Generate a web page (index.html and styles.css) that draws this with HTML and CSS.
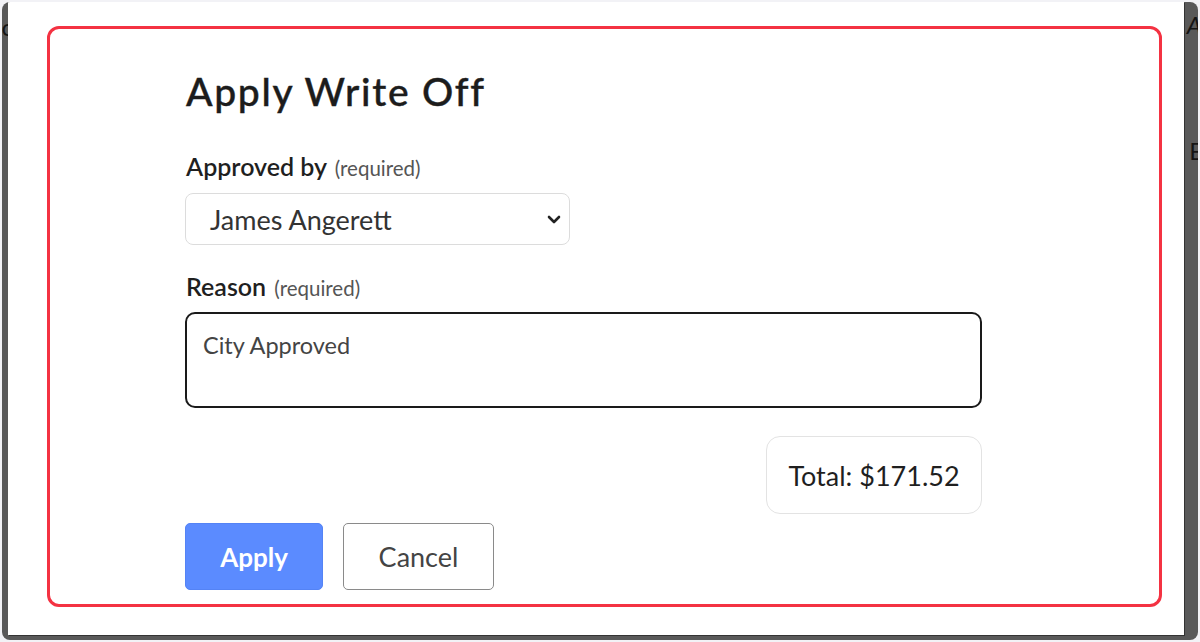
FILE: index.html
```html
<!DOCTYPE html>
<html lang="en">
<head>
<meta charset="utf-8">
<title>Apply Write Off</title>
<link rel="stylesheet" href="styles.css">
</head>
<body>
<div class="backdrop">
  <span class="ghost ghost-left-top">nc</span>
  <span class="ghost ghost-right-a">A</span>
  <span class="ghost ghost-right-e">E</span>
  <div class="modal">
    <div class="frame">
      <h1 class="title">Apply Write Off</h1>
      <div class="field">
        <label class="label">Approved by <span class="req">(required)</span></label>
        <div class="select">
          <span class="select-value">James Angerett</span>
          <svg class="chevron" width="14" height="9" viewBox="0 0 14 9"><path d="M2 2 L7 7 L12 2" fill="none" stroke="#222" stroke-width="2.6" stroke-linecap="round" stroke-linejoin="round"/></svg>
        </div>
      </div>
      <div class="field field-reason">
        <label class="label">Reason <span class="req">(required)</span></label>
        <textarea class="textarea">City Approved</textarea>
      </div>
      <div class="total-row">
        <div class="total">Total: $171.52</div>
      </div>
      <div class="actions">
        <button class="btn btn-primary">Apply</button>
        <button class="btn btn-secondary">Cancel</button>
      </div>
    </div>
  </div>
</div>
</body>
</html>
```
FILE: styles.css
```css
* { box-sizing: border-box; }
html, body { margin: 0; padding: 0; }
body {
  background: #f2f2f6;
  width: 1200px;
  height: 642px;
  overflow: hidden;
  font-family: Lato, "Noto Sans", sans-serif;
  padding: 2px;
}
.backdrop {
  position: relative;
  height: 638px;
  background: #595959;
  border-radius: 8px;
  display: flex;
  padding: 0 14px 5px 6px;
  overflow: hidden;
}
.ghost {
  position: absolute;
  color: #141414;
  font-size: 24px;
  font-family: Lato, sans-serif;
}
.ghost-left-top { left: -14px; top: 10px; }
.ghost-right-a { right: -4px; top: 8px; font-style: italic; }
.ghost-right-e { right: -5px; top: 134px; }
.modal {
  position: relative;
  flex: 1;
  background: #fff;
  box-shadow: 1px 1px 0 #333;
  padding: 24px 22px 28px 39px;
  display: flex;
}
.frame {
  flex: 1;
  border: 3px solid #f43242;
  border-radius: 12px;
  padding: 39px 0 0 135px;
  display: flex;
  flex-direction: column;
  align-items: flex-start;
}
.title {
  margin: 0 0 0 1px;
  font-size: 39px;
  line-height: 46px;
  font-weight: 500;
  letter-spacing: 1.7px;
  color: #1c1c1c;
  -webkit-text-stroke: 0.4px #1c1c1c;
}
.field { display: flex; flex-direction: column; align-items: flex-start; margin-top: 37px; }
.field-reason { margin-top: 26px; }
.label {
  font-size: 25px;
  line-height: 30px;
  font-weight: 600;
  color: #1f1f1f;
  margin-left: 1px;
}
.req {
  font-size: 20.5px;
  font-weight: 400;
  color: #555;
  margin-left: 2px;
}
.select {
  margin-top: 10px;
  width: 385px;
  height: 52px;
  border: 1px solid #dcdcdc;
  border-radius: 8px;
  display: flex;
  align-items: center;
  justify-content: space-between;
  padding: 0 8px 0 24px;
}
.select-value {
  font-size: 27px;
  color: #333;
}
.textarea {
  margin-top: 9px;
  width: 797px;
  height: 96px;
  border: 2px solid #1a1a1a;
  border-radius: 10px;
  font-family: Lato, sans-serif;
  font-size: 23.5px;
  color: #444;
  padding: 17px 16px;
  resize: none;
  outline: none;
}
.total-row {
  width: 797px;
  display: flex;
  justify-content: flex-end;
  margin-top: 28px;
}
.total {
  width: 216px;
  height: 78px;
  border: 1px solid #e3e3e3;
  border-radius: 14px;
  display: flex;
  align-items: center;
  justify-content: center;
  font-size: 27px;
  color: #1f1f1f;
}
.actions {
  margin-top: 9px;
  display: flex;
  gap: 20px;
}
.btn {
  height: 67px;
  border-radius: 5px;
  font-family: Lato, sans-serif;
  font-size: 26px;
  cursor: pointer;
}
.btn-primary {
  width: 138px;
  background: #5b8bff;
  border: 1px solid #5483f5;
  color: #fff;
  font-weight: 700;
}
.btn-secondary {
  width: 151px;
  background: #fff;
  border: 1px solid #8a8a8a;
  color: #444;
  font-size: 27px;
  font-weight: 400;
}
```
